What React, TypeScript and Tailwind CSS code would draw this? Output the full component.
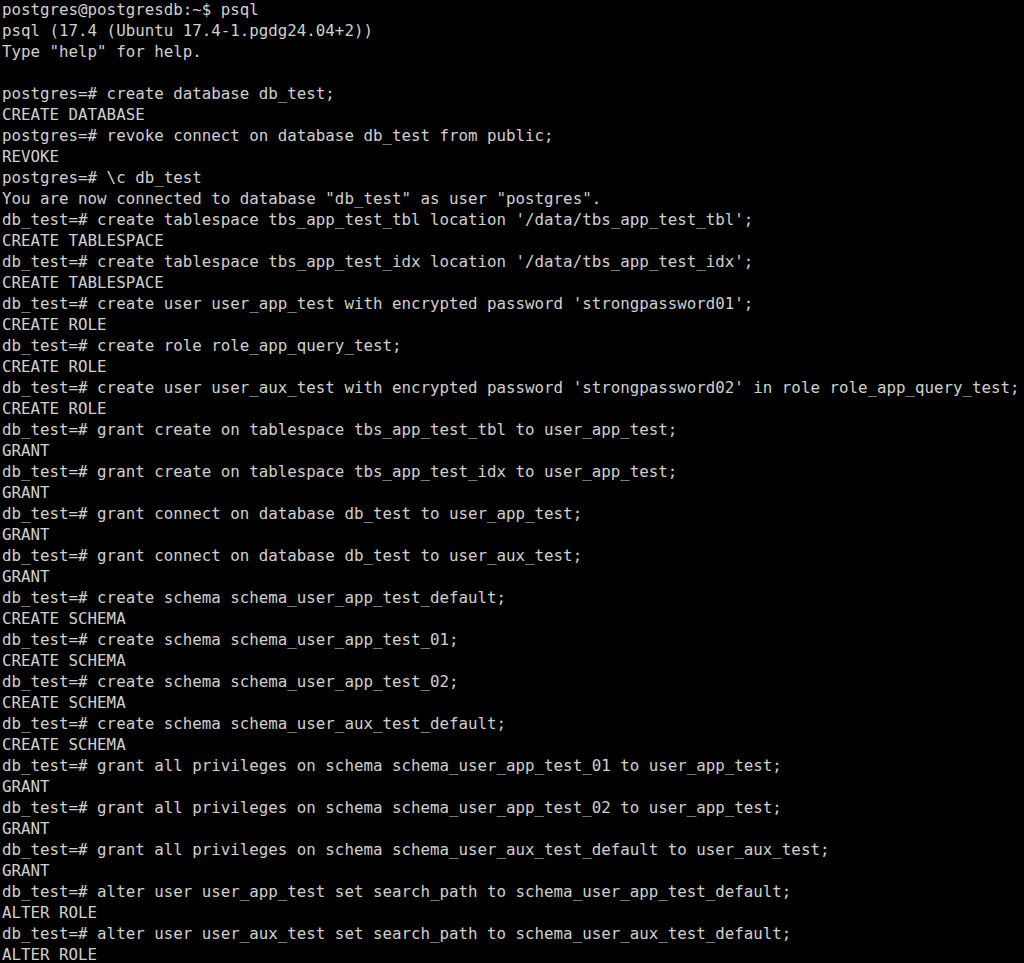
import React from 'react';

const lines = [
  'postgres@postgresdb:~$ psql',
  'psql (17.4 (Ubuntu 17.4-1.pgdg24.04+2))',
  'Type "help" for help.',
  '',
  'postgres=# create database db_test;',
  'CREATE DATABASE',
  'postgres=# revoke connect on database db_test from public;',
  'REVOKE',
  'postgres=# \\c db_test',
  'You are now connected to database "db_test" as user "postgres".',
  "db_test=# create tablespace tbs_app_test_tbl location '/data/tbs_app_test_tbl';",
  'CREATE TABLESPACE',
  "db_test=# create tablespace tbs_app_test_idx location '/data/tbs_app_test_idx';",
  'CREATE TABLESPACE',
  "db_test=# create user user_app_test with encrypted password 'strongpassword01';",
  'CREATE ROLE',
  'db_test=# create role role_app_query_test;',
  'CREATE ROLE',
  "db_test=# create user user_aux_test with encrypted password 'strongpassword02' in role role_app_query_test;",
  'CREATE ROLE',
  'db_test=# grant create on tablespace tbs_app_test_tbl to user_app_test;',
  'GRANT',
  'db_test=# grant create on tablespace tbs_app_test_idx to user_app_test;',
  'GRANT',
  'db_test=# grant connect on database db_test to user_app_test;',
  'GRANT',
  'db_test=# grant connect on database db_test to user_aux_test;',
  'GRANT',
  'db_test=# create schema schema_user_app_test_default;',
  'CREATE SCHEMA',
  'db_test=# create schema schema_user_app_test_01;',
  'CREATE SCHEMA',
  'db_test=# create schema schema_user_app_test_02;',
  'CREATE SCHEMA',
  'db_test=# create schema schema_user_aux_test_default;',
  'CREATE SCHEMA',
  'db_test=# grant all privileges on schema schema_user_app_test_01 to user_app_test;',
  'GRANT',
  'db_test=# grant all privileges on schema schema_user_app_test_02 to user_app_test;',
  'GRANT',
  'db_test=# grant all privileges on schema schema_user_aux_test_default to user_aux_test;',
  'GRANT',
  'db_test=# alter user user_app_test set search_path to schema_user_app_test_default;',
  'ALTER ROLE',
  'db_test=# alter user user_aux_test set search_path to schema_user_aux_test_default;',
  'ALTER ROLE',
];

const App = () => {
  return (
    <div className="h-[963px] w-[1024px] overflow-hidden bg-black pl-[2px] font-['DejaVu_Sans_Mono',monospace] text-[15.8px] leading-[21px] text-[#d0d0cc]">
      <div className="-mt-px">
        {lines.map((line, i) => (
          <div key={i} className="h-[21px] whitespace-pre">
            {line}
          </div>
        ))}
      </div>
    </div>
  );
};

export default App;
